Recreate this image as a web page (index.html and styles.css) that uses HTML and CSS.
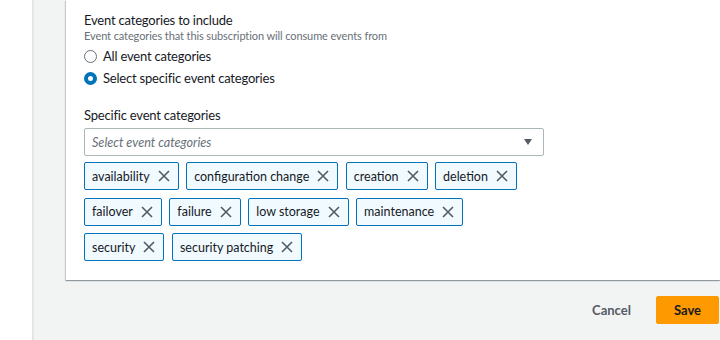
FILE: index.html
```html
<!DOCTYPE html>
<html>
<head>
<meta charset="utf-8">
<link rel="stylesheet" href="styles.css">
</head>
<body>
<div class="page">
  <div class="rail"></div>
  <main class="main">
    <section class="card">
      <div class="field">
        <div class="label">Event categories to include</div>
        <div class="desc">Event categories that this subscription will consume events from</div>
        <div class="radios">
          <label class="radio"><span class="dot"></span>All event categories</label>
          <label class="radio"><span class="dot on"></span>Select specific event categories</label>
        </div>
      </div>
      <div class="field field2">
        <div class="label">Specific event categories</div>
        <div class="select">
          <span class="ph">Select event categories</span>
          <svg class="caret" width="10" height="8" viewBox="0 0 10 8"><polygon points="1,1 9,1 5,7" fill="#545b64"/></svg>
        </div>
        <div class="tokens">
          <div class="token-row">
            <span class="token">availability<svg class="x" width="12" height="12" viewBox="0 0 12 12"><path d="M1 1 L11 11 M11 1 L1 11" stroke="#545b64" stroke-width="1.6"/></svg></span>
            <span class="token">configuration change<svg class="x" width="12" height="12" viewBox="0 0 12 12"><path d="M1 1 L11 11 M11 1 L1 11" stroke="#545b64" stroke-width="1.6"/></svg></span>
            <span class="token">creation<svg class="x" width="12" height="12" viewBox="0 0 12 12"><path d="M1 1 L11 11 M11 1 L1 11" stroke="#545b64" stroke-width="1.6"/></svg></span>
            <span class="token">deletion<svg class="x" width="12" height="12" viewBox="0 0 12 12"><path d="M1 1 L11 11 M11 1 L1 11" stroke="#545b64" stroke-width="1.6"/></svg></span>
          </div>
          <div class="token-row">
            <span class="token">failover<svg class="x" width="12" height="12" viewBox="0 0 12 12"><path d="M1 1 L11 11 M11 1 L1 11" stroke="#545b64" stroke-width="1.6"/></svg></span>
            <span class="token">failure<svg class="x" width="12" height="12" viewBox="0 0 12 12"><path d="M1 1 L11 11 M11 1 L1 11" stroke="#545b64" stroke-width="1.6"/></svg></span>
            <span class="token">low storage<svg class="x" width="12" height="12" viewBox="0 0 12 12"><path d="M1 1 L11 11 M11 1 L1 11" stroke="#545b64" stroke-width="1.6"/></svg></span>
            <span class="token">maintenance<svg class="x" width="12" height="12" viewBox="0 0 12 12"><path d="M1 1 L11 11 M11 1 L1 11" stroke="#545b64" stroke-width="1.6"/></svg></span>
          </div>
          <div class="token-row">
            <span class="token">security<svg class="x" width="12" height="12" viewBox="0 0 12 12"><path d="M1 1 L11 11 M11 1 L1 11" stroke="#545b64" stroke-width="1.6"/></svg></span>
            <span class="token">security patching<svg class="x" width="12" height="12" viewBox="0 0 12 12"><path d="M1 1 L11 11 M11 1 L1 11" stroke="#545b64" stroke-width="1.6"/></svg></span>
          </div>
        </div>
      </div>
    </section>
    <div class="actions">
      <button class="btn-link">Cancel</button>
      <button class="btn-primary">Save</button>
    </div>
  </main>
</div>
</body>
</html>
```

FILE: styles.css
```css
html, body {
  margin: 0;
  padding: 0;
  height: 100%;
}
body {
  font-family: "Lato", "Liberation Sans", sans-serif;
  color: #16191f;
  background: #fff;
}
.page {
  display: flex;
  height: 340px;
  overflow: hidden;
}
.rail {
  width: 32px;
  flex: none;
  border-right: 2px solid #e4e6e6;
  background: #fff;
}
.main {
  flex: 1;
  background: #f2f3f3;
  padding-left: 32px;
  display: flex;
  flex-direction: column;
}
.card {
  background: #fff;
  box-shadow: 0 1px 1px 0 rgba(0, 28, 36, 0.3), -1px 1px 1px 0 rgba(0, 28, 36, 0.15);
  padding: 11px 20px 19px 18px;
}
.label {
  font-size: 13px;
  letter-spacing: -0.2px;
  line-height: 18px;
  color: #16191f;
}
.desc {
  font-size: 11px;
  letter-spacing: -0.1px;
  line-height: 14px;
  color: #687078;
}
.radios {
  margin-top: 2px;
}
.radio {
  display: flex;
  align-items: center;
  font-size: 13px;
  letter-spacing: -0.2px;
  line-height: 22px;
  height: 22px;
  color: #16191f;
}
.dot {
  width: 11px;
  height: 11px;
  border: 1px solid #687078;
  border-radius: 50%;
  box-sizing: content-box;
  margin-right: 6px;
  background: #fff;
}
.dot.on {
  width: 5px;
  height: 5px;
  border: 4px solid #0073bb;
}
.field2 {
  margin-top: 17px;
}
.select {
  margin-top: 4px;
  box-sizing: border-box;
  width: 460px;
  height: 28px;
  border: 1px solid #aab7b8;
  border-radius: 2px;
  display: flex;
  align-items: center;
  justify-content: space-between;
  padding: 0 10px 0 7px;
}
.ph {
  font-size: 12.6px;
  font-style: italic;
  color: #687078;
}
.caret {
  display: block;
}
.tokens {
  margin-top: 6px;
  display: flex;
  flex-direction: column;
  gap: 7.5px;
}
.token-row {
  display: flex;
  gap: 7.5px;
}
.token {
  display: inline-flex;
  align-items: center;
  box-sizing: border-box;
  height: 28px;
  border: 1px solid #0073bb;
  border-radius: 2px;
  background: #f1faff;
  padding: 0 8px 0 7px;
  font-size: 12.5px;
  color: #16191f;
}
.x {
  margin-left: 8px;
}
.actions {
  display: flex;
  justify-content: flex-end;
  align-items: center;
  margin-top: 16px;
  padding-right: 1px;
}
.btn-link {
  font-family: inherit;
  font-size: 13px;
  font-weight: 700;
  color: #545b64;
  background: none;
  border: none;
  padding: 0;
  margin-right: 25px;
}
.btn-primary {
  font-family: inherit;
  font-size: 13px;
  font-weight: 700;
  color: #16191f;
  background: #ff9900;
  border: 1px solid #ff9900;
  border-radius: 2px;
  height: 28px;
  padding: 0 17px;
}
```
